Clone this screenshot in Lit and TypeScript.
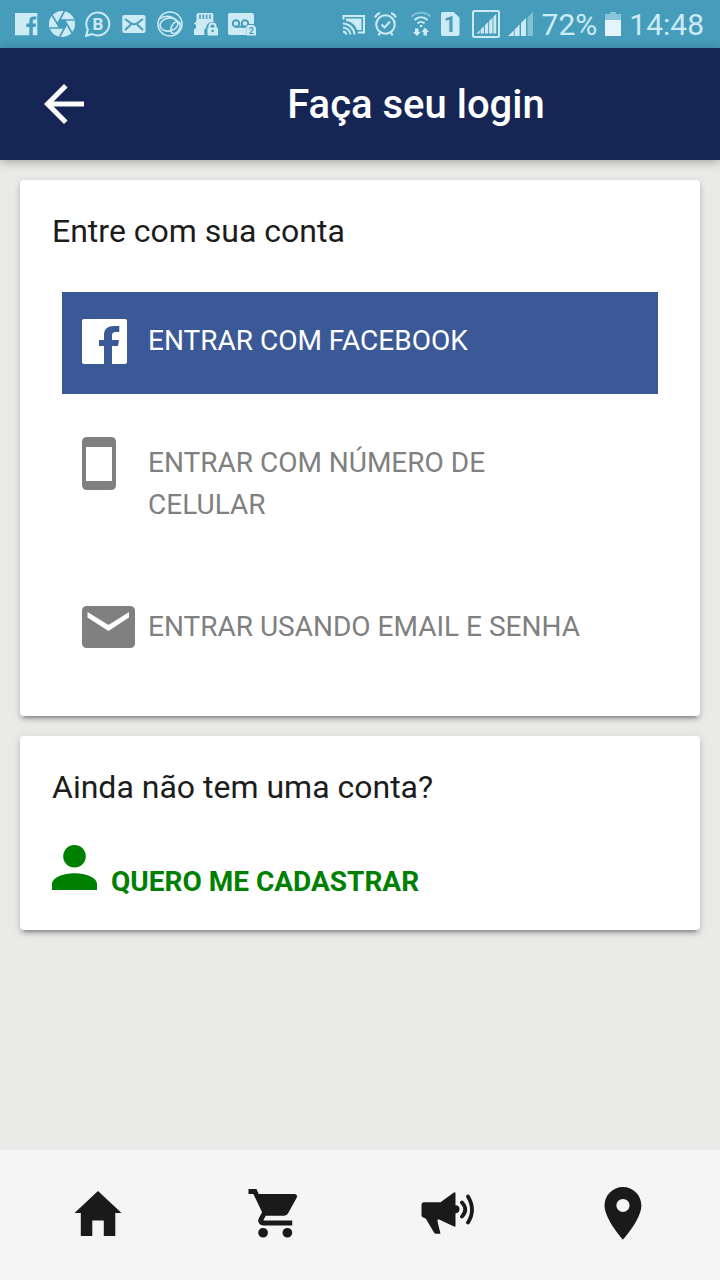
import { LitElement, html, css, svg } from "lit";
import { customElement } from "lit/decorators.js";

const statusLeft = [
  // Facebook
  svg`<path d="M3 3h22.3v22.3h-4.5V17h2.8l.5-3.4h-3.3v-2c0-1.4.5-2 2-2h1.6V6.4h-2.8c-3 0-4.3 1.8-4.3 4.6v2.6h-3V17h3v8.3H3z"/>`,
  // Camera shutter
  svg`<circle cx="14" cy="14" r="13"/><g class="cut"><path d="M11.8 10h4.6l2.3 4-2.3 4h-4.6l-2.3-4z" fill="currentColor" stroke="none"/><path d="M11.8 10H26M16.4 10l7.6 13M18.700 14L11.500 27M16.400 18H2M11.800 18L4 5M9.500 14L16.500 1"/></g>`,
  // Business chat
  svg`<path class="line" d="M2.200 25.800l1.600-6.200A11.500 11.500 0 1 1 8.200 24z"/><text class="mark" x="14" y="20">B</text>`,
  // Mail
  svg`<rect x="2.300" y="5" width="23.200" height="18" rx="2"/><path class="cut thick" d="M5 9l6 4.300c2 1.200 4 1.200 6 0L23 9M5 20l6-5.500M23 20l-6-5.500"/>`,
  // Globe
  svg`<g class="line thin"><circle cx="14" cy="14" r="12"/><ellipse cx="13" cy="14.500" rx="9" ry="6.500" transform="rotate(-12 13 14.500)"/><ellipse cx="19.500" cy="17.500" rx="4" ry="6.500" transform="rotate(28 19.500 17.500)"/><path d="M4 8.500c5-3 11-3 15.500 1.500 3 2.500 4 4 5.500 4"/></g>`,
  // Locked memory card
  svg`<path d="M6.500 3H20q1.300 0 1.300 1.300V12c-4-.5-7 2-7 6-1.600.5-2 1-2 2.500V25H2v-5.500l2-1.500v-3l-2-1.500 2.500-2.500V5q0-2 2-2z"/><path class="cut" d="M8 4.500v4.500M11.300 4.500v4.500M14.600 4.500v4.500M17.900 4.500v4.500"/><path class="line" d="M17.500 18v-1.500a3 3 0 0 1 6 0V18"/><rect x="15.500" y="17.500" width="10.500" height="8" rx="1"/><circle cx="20.700" cy="21" r="1.300" class="hole"/>`,
  // Voicemail
  svg`<path d="M2 3h22q2 0 2 2v9h-5.500q-2 0-2 2v9H2q-2 0-2-2V5q0-2 2-2z"/><g class="cut thick"><circle cx="8" cy="13.500" r="3.200"/><circle cx="17" cy="13.500" r="3.200"/><path d="M8 16.700h9"/></g><path d="M20.300 15h5.200l2.500 2.500v8h-9.500v-8.500q0-2 1.800-2z"/><text class="mark small cutout" x="23.300" y="24">2</text>`,
];

const cast = svg`<path class="line" d="M1.500 9.500V6h20.500v16.500h-6M1 21.500a4 4 0 0 1 3.500 3M1 17.500a8 8 0 0 1 7.500 7M1 13.500a12 12 0 0 1 11.500 11"/><path d="M4 8.500h15.500V20h-4.500C13 14.500 9 11.500 4 11z"/>`;
const alarm = svg`<g class="line"><circle cx="11.500" cy="14.500" r="9.300"/><path d="M7.500 14.500l3 3 5.500-6M1 7.500Q2.500 4 6 3M22 7.500Q20.500 4 17 3M6 22.500l-1.500 3M17 22.500l1.500 3"/></g>`;
const wifi = svg`<g class="line"><path opacity=".45" d="M1.500 6.500c5-5 14-5 19 0"/><path d="M4.500 10c4-3.800 9-3.800 13 0M7.500 13.500c2-2 5-2 7 0"/></g><circle cx="11" cy="16" r="1.300"/><path d="M5 18.500h3.500v3.500h2L7 26 3 22h2zM13.500 25.500h3.500V22h2L15 17.500l-3.500 4.500h2z"/>`;
const sim = svg`<path d="M3 2h10.500L19.500 7.500V24q0 2-2 2H3q-2 0-2-2V4q0-2 2-2z"/><text class="mark digit cutout" x="10" y="22">1</text>`;
const signalBoxed = svg`<rect class="line" x="1" y="1" width="26" height="26" rx="1.500"/><path d="M4.500 23.500l3.200-3.200v3.200zM8.600 19.500l3.300-3.200v7.200H8.600zM12.900 15.200l3.300-3.200v11.500h-3.300zM17.200 11l3.300-3.200v15.700h-3.300zM21.400 6.700l2.800-2.700v19.500h-2.800z"/>`;
const signalPlain = svg`<path d="M0 26l5.800-5.500V26zM6.600 19.500l5-5V26h-5zM13 13l5-5v18h-5z"/><path opacity=".45" d="M19.500 7.500L25 2v24h-5.500z"/>`;
const battery = svg`<path opacity=".5" d="M5 2h6v2h5v6H0V4h5z"/><path class="charge" d="M0 10h16v16H0z"/>`;

const arrow = svg`<path d="M20 11H7.830l5.590-5.590L12 4l-8 8 8 8 1.410-1.410L7.830 13H20z"/>`;
const facebook = svg`<path d="M2 0h41q2 0 2 2v41q0 2-2 2H30V27h6l1-6h-7v-4c0-3 1-4 4-4h3.300V7H31.500C25 7 22 10.500 22 16v5h-5v6h5v18H2q-2 0-2-2V2q0-2 2-2z"/>`;
const phone = svg`<path fill-rule="evenodd" d="M5 0h24q5 0 5 5v43q0 5-5 5H5q-5 0-5-5V5q0-5 5-5zM4 10v34h26V10z"/>`;
const envelope = svg`<path fill-rule="evenodd" d="M5 0h43q5 0 5 5v32q0 5-5 5H5q-5 0-5-5V5q0-5 5-5zM5.500 6v5.500L26.500 25 47 11.500V6L26.500 19z"/>`;
const person = svg`<circle cx="22.500" cy="11.300" r="11.300"/><path d="M0 45v-6c0-6.500 11-10.800 22.500-10.800S45 32.500 45 39v6z"/>`;

const tabs = [
  { label: "Início", art: svg`<path d="M28 6l23.500 22h-6.200v23H33.800V35.600H22.300V51H10.800V28H4.500z"/>` },
  {
    label: "Carrinho",
    art: svg`<path transform="translate(1.070 -.840) scale(2.430)" d="M7 18a2 2 0 1 0 0 4 2 2 0 0 0 0-4zM1 2v2h2l3.600 7.590-1.350 2.450c-.16.28-.25.61-.25.96 0 1.100.9 2 2 2h12v-2H7.420c-.14 0-.25-.11-.25-.25l.03-.12.9-1.630h7.450c.75 0 1.410-.41 1.750-1.030l3.580-6.490c.08-.14.12-.31.12-.48 0-.55-.45-1-1-1H5.210l-.94-2zM17 18a2 2 0 1 0 0 4 2 2 0 0 0 0-4z"/>`,
  },
  {
    label: "Novidades",
    art: svg`<path d="M4 17.300h16.500L33.500 7.700q2-1 2 1v11.600a4 4 0 0 1 0 8v12.400q0 1.500-2 .6L18.500 34.300q-1.300 0-1 2l3 12.400h-4.500q-1.200 0-2-1.200L6 34q-.8-1-2-1.300-2.500 0-2.500-2.400v-10.500q0-2.500 2.500-2.500z"/><path class="wave" d="M42 17.500q6.500 7 0 14M48 11.500q8 13.500 0 26"/>`,
  },
  {
    label: "Lojas",
    art: svg`<path transform="translate(-3.600 -3.200) scale(2.630)" d="M12 2C8.130 2 5 5.130 5 9c0 5.250 7 13 7 13s7-7.750 7-13c0-3.870-3.130-7-7-7zm0 9.500a2.500 2.500 0 1 1 0-5 2.500 2.500 0 0 1 0 5z"/>`,
  },
];

@customElement("status-bar")
class StatusBar extends LitElement {
  static styles = css`
    :host {
      display: flex;
      align-items: center;
      gap: 8px;
      height: 48px;
      padding: 0 16px 0 12px;
      background: #469dbb;
      color: #cdebf5;
      font: 400 30px/48px Roboto, sans-serif;
    }
    svg { display: block; flex: none; height: 28px; fill: currentColor; }
    .w28 { width: 28px; }
    .w26 { width: 26px; }
    .w24 { width: 24px; }
    .w22 { width: 22px; }
    .w16 { width: 16px; }
    .space { flex: 1; }
    .line { fill: none; stroke: currentColor; stroke-width: 2; }
    .thin { stroke-width: 1.6px; }
    .cut { color: #469dbb; fill: none; stroke: #469dbb; stroke-width: 1.6px; }
    .thick { stroke-width: 2px; }
    .hole, .cutout { fill: #469dbb; }
    .charge { fill: #e4f4f9; }
    .mark { font-size: 17px; font-weight: 700; line-height: 1; text-anchor: middle; }
    .small { font-size: 9px; }
    .digit { font-size: 22px; }
    .text { padding-top: 2px; }
  `;
  render() {
    return html`
      ${statusLeft.map((art) => html`<svg class="w28" viewBox="0 0 28 28" aria-hidden="true">${art}</svg>`)}
      <span class="space"></span>
      <svg class="w24" viewBox="0 0 24 28" aria-hidden="true">${cast}</svg>
      <svg class="w28" viewBox="0 0 28 28" aria-hidden="true">${alarm}</svg>
      <svg class="w22" viewBox="0 0 22 28" aria-hidden="true">${wifi}</svg>
      <svg class="w24" viewBox="0 0 24 28" aria-hidden="true">${sim}</svg>
      <svg class="w28" viewBox="0 0 28 28" aria-hidden="true">${signalBoxed}</svg>
      <svg class="w26" viewBox="0 0 26 28" aria-hidden="true">${signalPlain}</svg>
      <span class="text">72%</span>
      <svg class="w16" viewBox="0 0 16 28" aria-hidden="true">${battery}</svg>
      <time class="text">14:48</time>
    `;
  }
}

@customElement("tab-bar")
class TabBar extends LitElement {
  static styles = css`
    :host { display: block; background: #f5f5f5; }
    nav {
      display: grid;
      grid-template-columns: repeat(4, 1fr);
      padding: 35px 10px 39px;
    }
    a { display: flex; justify-content: center; color: #1a1a1a; }
    svg { display: block; width: 56px; height: 56px; fill: currentColor; }
    .wave { fill: none; stroke: currentColor; stroke-width: 3.8px; stroke-linecap: round; }
  `;
  render() {
    return html`<nav>
      ${tabs.map(
        (tab) => html`<a href="#" aria-label=${tab.label}><svg viewBox="0 0 56 56" aria-hidden="true">${tab.art}</svg></a>`,
      )}
    </nav>`;
  }
}

@customElement("app-root")
class AppRoot extends LitElement {
  static styles = css`
    :host {
      display: flex;
      flex-direction: column;
      min-height: 100vh;
      background: #eaeae8;
      color: #1c1c1c;
      font-family: Roboto, sans-serif;
    }
    svg { display: block; flex: none; fill: currentColor; }
    button {
      border: 0;
      border-radius: 0;
      background: none;
      color: inherit;
      font: inherit;
      text-align: left;
      cursor: pointer;
    }
    header {
      display: flex;
      align-items: center;
      height: 112px;
      padding-left: 32px;
      background: #152655;
      color: #fff;
      box-shadow: 0 2px 10px rgba(0, 0, 0, 0.3);
    }
    .back { display: flex; width: 64px; height: 64px; margin-right: 16px; padding: 12px; }
    h1 { flex: 1; margin: 0; padding-top: 2px; font-size: 40px; line-height: 48px; font-weight: 500; text-align: center; }
    main { display: flex; flex: 1; flex-direction: column; gap: 20px; padding: 20px; }
    section {
      padding: 32px 32px 36px;
      border-radius: 4px;
      background: #fff;
      box-shadow:
        0 4px 4px rgba(0, 0, 0, 0.14),
        0 6px 2px -4px rgba(0, 0, 0, 0.2),
        0 2px 10px rgba(0, 0, 0, 0.12);
    }
    h2 { margin: 0; font-size: 32px; line-height: 38px; font-weight: 400; }
    .options { display: flex; flex-direction: column; gap: 20px; padding: 42px 10px 0; }
    .option {
      display: flex;
      align-items: flex-start;
      padding: 28px 20px 32px;
      color: #808080;
      font-size: 28px;
      line-height: 42px;
    }
    .facebook { background: #3b5996; color: #fff; }
    .glyph { display: flex; flex: none; align-items: center; width: 66px; height: 42px; }
    .label { max-width: 440px; }
    .signup { padding-bottom: 27px; }
    .join {
      display: flex;
      align-items: flex-end;
      gap: 14px;
      margin-top: 39px;
      padding: 0;
      color: #008000;
      font-size: 28px;
      line-height: 42px;
      font-weight: 700;
    }
    .person { padding-bottom: 13px; }
  `;
  render() {
    return html`
      <status-bar></status-bar>
      <header>
        <button class="back" aria-label="Voltar">
          <svg width="40" height="40" viewBox="4 4 16 16" aria-hidden="true">${arrow}</svg>
        </button>
        <h1>Faça seu login</h1>
      </header>
      <main>
        <section>
          <h2>Entre com sua conta</h2>
          <div class="options">
            <button class="option facebook">
              <span class="glyph"><svg width="45" height="45" viewBox="0 0 45 45" aria-hidden="true">${facebook}</svg></span>
              <span class="label">ENTRAR COM FACEBOOK</span>
            </button>
            <button class="option">
              <span class="glyph"><svg width="34" height="53" viewBox="0 0 34 53" aria-hidden="true">${phone}</svg></span>
              <span class="label">ENTRAR COM NÚMERO DE CELULAR</span>
            </button>
            <button class="option">
              <span class="glyph"><svg width="53" height="42" viewBox="0 0 53 42" aria-hidden="true">${envelope}</svg></span>
              <span class="label">ENTRAR USANDO EMAIL E SENHA</span>
            </button>
          </div>
        </section>
        <section class="signup">
          <h2>Ainda não tem uma conta?</h2>
          <button class="join">
            <span class="person"><svg width="45" height="45" viewBox="0 0 45 45" aria-hidden="true">${person}</svg></span>
            <span>QUERO ME CADASTRAR</span>
          </button>
        </section>
      </main>
      <tab-bar></tab-bar>
    `;
  }
}
